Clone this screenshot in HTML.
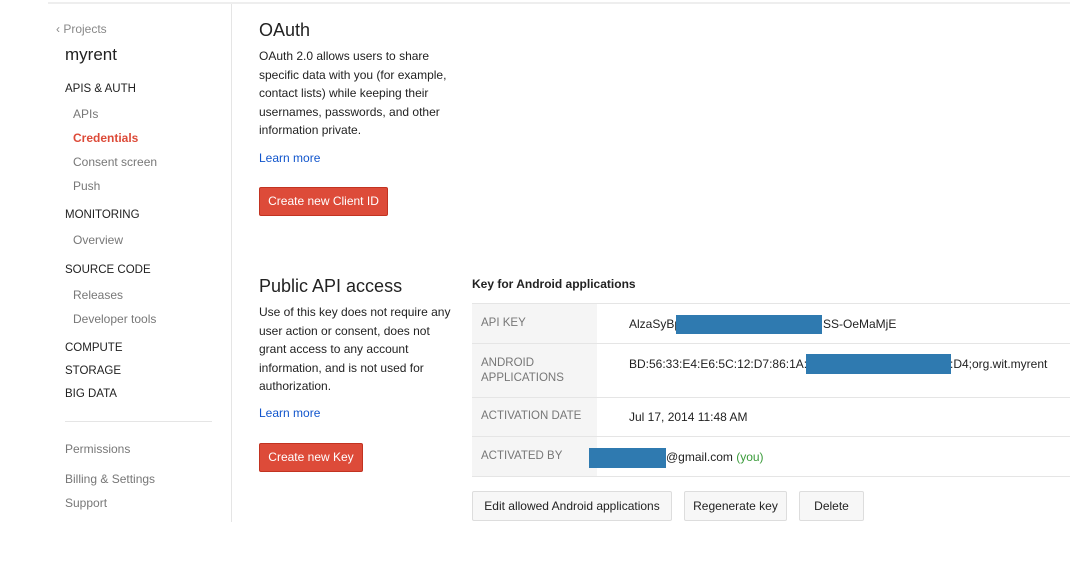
<!DOCTYPE html>
<html><head><style>
body{margin:0;width:1070px;height:567px;background:#fff;font-family:"Liberation Sans",Arial,sans-serif;position:relative;overflow:hidden;color:#222}
.a{position:absolute;white-space:nowrap}
.s{font-size:12px;color:#777}
.h{font-size:11.5px;color:#222;text-transform:uppercase}
.p{font-size:12px;line-height:18.5px;color:#222}
.btnr{position:absolute;background:#dd4b39;border:1px solid #c23321;color:#fff;font-size:12px;text-align:center;border-radius:2px;box-sizing:border-box}
.btn{position:absolute;background:#f7f7f7;border:1px solid #ddd;color:#222;font-size:12px;text-align:center;box-sizing:border-box;border-radius:2px}
.lab{color:#777;font-size:11.5px}
.val{font-size:12px;color:#222}
.red{position:absolute;background:#2f7ab0}
.hl{position:absolute;left:472px;width:598px;height:1px;background:#e5e5e5}
</style></head><body>
<div class="a" style="left:48px;top:2px;width:1022px;height:2px;background:#eee"></div>
<div class="a" style="left:231px;top:4px;width:1px;height:518px;background:#e5e5e5"></div>
<div class="a s" style="left:56px;top:22px;color:#888">‹ Projects</div>
<div class="a" style="left:65px;top:45px;font-size:17px;color:#222">myrent</div>
<div class="a h" style="left:65px;top:83px">APIs &amp; Auth</div>
<div class="a s" style="left:73px;top:107px">APIs</div>
<div class="a s" style="left:73px;top:131px;color:#dd4b39;font-weight:bold">Credentials</div>
<div class="a s" style="left:73px;top:155px">Consent screen</div>
<div class="a s" style="left:73px;top:179px">Push</div>
<div class="a h" style="left:65px;top:209px">Monitoring</div>
<div class="a s" style="left:73px;top:233px">Overview</div>
<div class="a h" style="left:65px;top:264px">Source code</div>
<div class="a s" style="left:73px;top:288px">Releases</div>
<div class="a s" style="left:73px;top:312px">Developer tools</div>
<div class="a h" style="left:65px;top:342px">Compute</div>
<div class="a h" style="left:65px;top:365px">Storage</div>
<div class="a h" style="left:65px;top:388px">Big Data</div>
<div class="a" style="left:65px;top:421px;width:147px;height:1px;background:#e5e5e5"></div>
<div class="a s" style="left:65px;top:442px">Permissions</div>
<div class="a s" style="left:65px;top:472px">Billing &amp; Settings</div>
<div class="a s" style="left:65px;top:496px">Support</div>

<div class="a" style="left:259px;top:20px;font-size:18px;color:#222">OAuth</div>
<div class="a p" style="left:259px;top:47px">OAuth 2.0 allows users to share<br>specific data with you (for example,<br>contact lists) while keeping their<br>usernames, passwords, and other<br>information private.</div>
<div class="a" style="left:259px;top:151px;font-size:12px;color:#1155cc">Learn more</div>
<div class="btnr" style="left:259px;top:187px;width:129px;height:29px;line-height:27px">Create new Client ID</div>

<div class="a" style="left:259px;top:276px;font-size:18px;color:#222">Public API access</div>
<div class="a p" style="left:259px;top:303px">Use of this key does not require any<br>user action or consent, does not<br>grant access to any account<br>information, and is not used for<br>authorization.</div>
<div class="a" style="left:259px;top:406px;font-size:12px;color:#1155cc">Learn more</div>
<div class="btnr" style="left:259px;top:443px;width:104px;height:29px;line-height:27px">Create new Key</div>

<div class="a" style="left:472px;top:277px;font-size:12px;font-weight:bold;color:#222">Key for Android applications</div>
<div class="a" style="left:472px;top:304px;width:125px;height:172px;background:#f5f5f5"></div>
<div class="hl" style="top:303px"></div>
<div class="hl" style="top:343px"></div>
<div class="hl" style="top:397px"></div>
<div class="hl" style="top:436px"></div>
<div class="hl" style="top:476px"></div>
<div class="a lab" style="left:481px;top:317px">API KEY</div>
<div class="a lab" style="left:481px;top:356px;line-height:15px">ANDROID<br>APPLICATIONS</div>
<div class="a lab" style="left:481px;top:410px">ACTIVATION DATE</div>
<div class="a lab" style="left:481px;top:450px">ACTIVATED BY</div>
<div class="a val" style="left:629px;top:317px">AlzaSyBp</div>
<div class="a val" style="left:823px;top:317px">SS-OeMaMjE</div>
<div class="red" style="left:676px;top:315px;width:146px;height:19px"></div>
<div class="a val" style="left:629px;top:357px">BD:56:33:E4:E6:5C:12:D7:86:1A:B</div>
<div class="a val" style="left:950px;top:357px">:D4;org.wit.myrent</div>
<div class="red" style="left:806px;top:354px;width:145px;height:20px"></div>
<div class="a val" style="left:629px;top:410px">Jul 17, 2014 11:48 AM</div>
<div class="red" style="left:589px;top:448px;width:77px;height:20px"></div>
<div class="a val" style="left:666px;top:450px">@gmail.com <span style="color:#3a9b3a">(you)</span></div>
<div class="btn" style="left:472px;top:491px;width:200px;height:30px;line-height:28px">Edit allowed Android applications</div>
<div class="btn" style="left:684px;top:491px;width:103px;height:30px;line-height:28px">Regenerate key</div>
<div class="btn" style="left:799px;top:491px;width:65px;height:30px;line-height:28px">Delete</div>
</body></html>
